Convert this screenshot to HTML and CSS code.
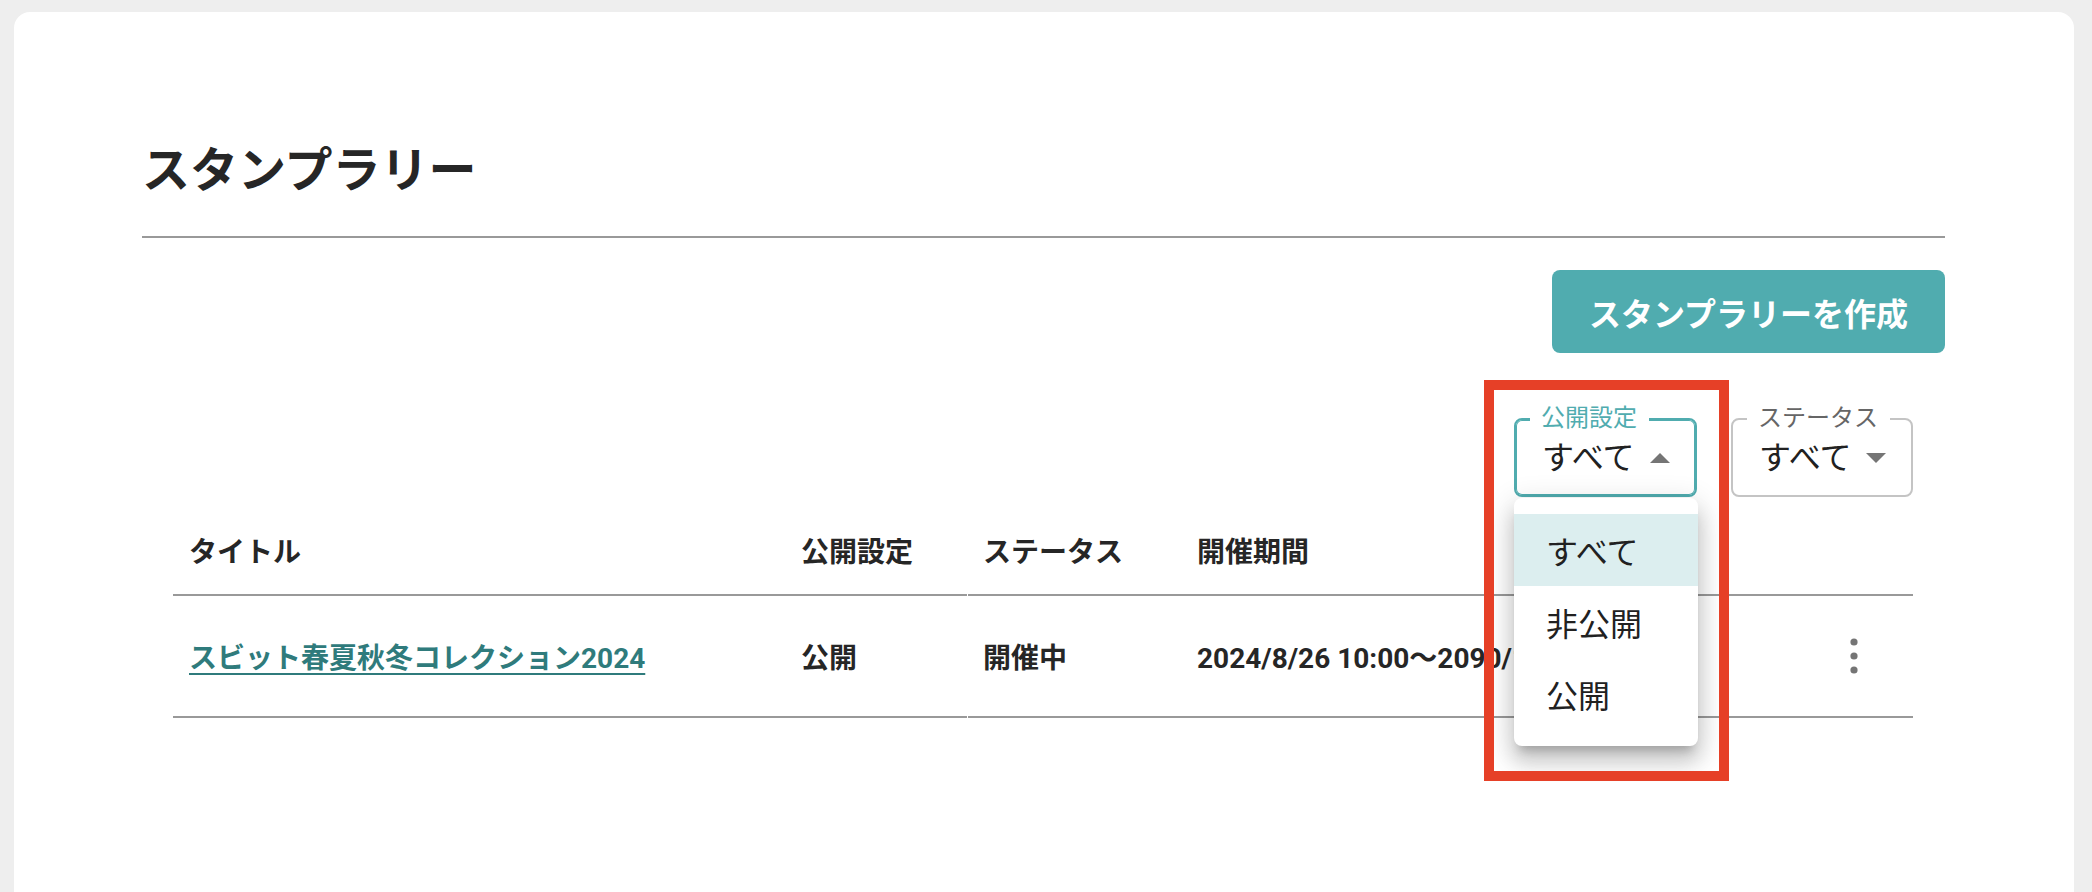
FILE: index.html
```html
<!DOCTYPE html>
<html lang="ja">
<head>
    <meta charset="UTF-8">
    <meta name="viewport" content="width=device-width, initial-scale=1.0">
    <title>スタンプラリー</title>
    <link rel="stylesheet" href="styles.css">
</head>
<body>
    <div class="card">
        <h1 class="page-title">スタンプラリー</h1>

        <div class="toolbar">
            <button class="create-button">スタンプラリーを作成</button>
        </div>

        <div class="filters">
            <div class="select select-open">
                <span class="select-label">公開設定</span>
                <span class="select-value">すべて</span>
                <svg class="select-arrow" width="20" height="10" viewBox="0 0 20 10"><path d="M0 10L10 0L20 10Z" fill="#757575"/></svg>

                <ul class="menu">
                    <li class="menu-item selected">すべて</li>
                    <li class="menu-item">非公開</li>
                    <li class="menu-item">公開</li>
                </ul>

                <div class="highlight"></div>
            </div>

            <div class="select select-status">
                <span class="select-label">ステータス</span>
                <span class="select-value">すべて</span>
                <svg class="select-arrow" width="20" height="10" viewBox="0 0 20 10"><path d="M0 0L10 10L20 0Z" fill="#757575"/></svg>
            </div>
        </div>

        <table class="rally-table">
            <colgroup>
                <col class="col-title">
                <col class="col-public">
                <col class="col-status">
                <col class="col-period">
                <col class="col-action">
            </colgroup>
            <thead>
                <tr>
                    <th>タイトル</th>
                    <th>公開設定</th>
                    <th class="split">ステータス</th>
                    <th>開催期間</th>
                    <th></th>
                </tr>
            </thead>
            <tbody>
                <tr>
                    <td><a class="rally-link" href="#">スビット春夏秋冬コレクション2024</a></td>
                    <td>公開</td>
                    <td class="split">開催中</td>
                    <td class="period">2024/8/26 10:00〜2090/12/31 23:59</td>
                    <td class="action">
                        <svg width="8" height="36" viewBox="0 0 8 36"><circle cx="4" cy="4" r="3.6" fill="#757575"/><circle cx="4" cy="18" r="3.6" fill="#757575"/><circle cx="4" cy="32" r="3.6" fill="#757575"/></svg>
                    </td>
                </tr>
            </tbody>
        </table>
    </div>
</body>
</html>
```

FILE: styles.css
```css
html, body {
    height: 100%;
    overflow: hidden;
}

body {
    margin: 0;
    background-color: #eeeeee;
    font-family: Roboto, "Noto Sans CJK JP", sans-serif;
    color: #262626;
}

.card {
    margin: 12px 18px 0 14px;
    min-height: 1000px;
    padding: 123px 129px 0 128px;
    background-color: #fff;
    border-radius: 16px;
}

.page-title {
    margin: 0;
    font-size: 48px;
    line-height: 72px;
    font-weight: 700;
    padding-bottom: 29px;
    border-bottom: 2px solid #999;
}

/* Create button */
.toolbar {
    display: flex;
    justify-content: flex-end;
    margin-top: 32px;
}

.create-button {
    height: 83px;
    padding: 0 37px;
    border: none;
    border-radius: 8px;
    background-color: #50acaf;
    color: #fff;
    font-family: Roboto, "Noto Sans CJK JP", sans-serif;
    font-size: 32px;
    font-weight: 700;
    cursor: pointer;
}

/* Filter selects */
.filters {
    display: flex;
    justify-content: flex-end;
    gap: 34px;
    margin-top: 65px;
    padding-right: 32px;
}

.select {
    position: relative;
    box-sizing: border-box;
    width: 183px;
    height: 79px;
    display: flex;
    align-items: center;
    justify-content: space-between;
    padding: 0 25px 0 26px;
    border: 2px solid #c4c4c4;
    border-radius: 8px;
    background-color: #fff;
}

.select-open {
    border-color: #50acaf;
    box-shadow: inset 0 0 0 1px #50acaf;
    z-index: 2;
}

.select-status {
    width: 182px;
}

.select-label {
    position: absolute;
    top: -14px;
    left: 14px;
    padding: 0 12px 0 11px;
    background-color: #fff;
    font-size: 24px;
    line-height: 24px;
    color: #666;
}

.select-open .select-label {
    color: #50acaf;
}

.select-value {
    font-size: 32px;
    line-height: 48px;
    color: #212121;
}

/* Open dropdown */
.menu {
    position: absolute;
    top: calc(100% + 3px);
    left: -2px;
    width: 184px;
    margin: 0;
    padding: 16px 0;
    list-style: none;
    background-color: #fff;
    border-radius: 8px;
    box-shadow: 0 10px 10px -6px rgba(0, 0, 0, 0.2), 0 16px 20px 2px rgba(0, 0, 0, 0.14), 0 6px 28px 4px rgba(0, 0, 0, 0.12);
}

.menu-item {
    height: 72px;
    display: flex;
    align-items: center;
    padding-left: 32px;
    font-size: 32px;
    color: #212121;
}

.menu-item.selected {
    background-color: #dceeef;
}

.highlight {
    position: absolute;
    top: -40px;
    left: -32px;
    width: 245px;
    height: 401px;
    box-sizing: border-box;
    border: 10px solid #e64027;
    pointer-events: none;
}

/* Table */
.rally-table {
    width: calc(100% - 63px);
    margin: 9px 32px 0 31px;
    border-collapse: separate;
    border-spacing: 0;
    table-layout: fixed;
}

.col-title { width: 612px; }
.col-public { width: 182px; }
.col-status { width: 214px; }
.col-action { width: 118px; }

.rally-table th,
.rally-table td {
    padding: 0 0 0 16px;
    text-align: left;
    font-size: 28px;
    font-weight: 700;
    color: #262626;
    border-bottom: 2px solid #999;
    white-space: nowrap;
    overflow: hidden;
}

.rally-table th {
    height: 88px;
}

.rally-table td {
    height: 120px;
}

.rally-table .split {
    position: relative;
    overflow: visible;
}

.rally-table .split::after {
    content: "";
    position: absolute;
    left: 0;
    bottom: -2px;
    width: 1px;
    height: 2px;
    background-color: #fff;
}

.rally-link {
    color: #2f7b7c;
    text-decoration: underline;
    text-underline-offset: 5px;
    text-decoration-thickness: 2px;
}

.rally-table td.action {
    padding: 0;
}

.action svg {
    display: block;
    margin: 0 auto;
}
```
